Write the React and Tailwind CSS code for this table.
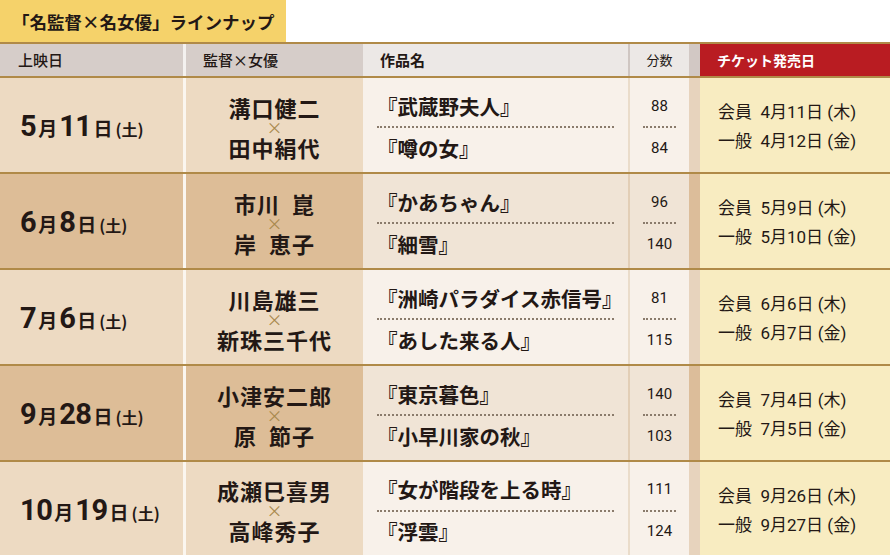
import React from 'react';

const rows = [
  { m: '5', d: '11', dir: ['溝口健二', '田中絹代'], films: ['『武蔵野夫人』', '『噂の女』'], mins: ['88', '84'], t: ['4月11日 (木)', '4月12日 (金)'] },
  { m: '6', d: '8', dir: ['市川\u2002崑', '岸\u2002恵子'], films: ['『かあちゃん』', '『細雪』'], mins: ['96', '140'], t: ['5月9日 (木)', '5月10日 (金)'] },
  { m: '7', d: '6', dir: ['川島雄三', '新珠三千代'], films: ['『洲崎パラダイス赤信号』', '『あした来る人』'], mins: ['81', '115'], t: ['6月6日 (木)', '6月7日 (金)'] },
  { m: '9', d: '28', dir: ['小津安二郎', '原\u2002節子'], films: ['『東京暮色』', '『小早川家の秋』'], mins: ['140', '103'], t: ['7月4日 (木)', '7月5日 (金)'] },
  { m: '10', d: '19', dir: ['成瀬巳喜男', '高峰秀子'], films: ['『女が階段を上る時』', '『浮雲』'], mins: ['111', '124'], t: ['9月26日 (木)', '9月27日 (金)'] },
];

const sans = 'font-["Noto_Sans_CJK_JP","Noto_Sans",sans-serif]';
const num = 'font-["Roboto","Noto_Sans_CJK_JP",sans-serif]';

const Row = ({ r, i }) => {
  const even = i % 2 === 1;
  const last = i === rows.length - 1;
  return (
    <div className={`flex ${last ? 'h-[93px]' : 'h-[96px] border-b-2 border-[#b08a48]'} text-[#231815]`}>
      {/* date */}
      <div className={`w-[183px] flex items-center pl-[20px] pt-[4px] ${even ? 'bg-[#ddbd97]' : 'bg-[#eddac2]'}`}>
        <div className={`${num} font-bold flex items-baseline`}>
          <span className="text-[29px] tracking-[-0.5px]">{r.m}</span>
          <span className={`${sans} text-[19px] mx-[2px]`}>月</span>
          <span className="text-[29px] tracking-[-0.5px]">{r.d}</span>
          <span className={`${sans} text-[19px] ml-[2px]`}>日</span>
          <span className={`${sans} text-[16px] ml-[3px]`}>(土)</span>
        </div>
      </div>
      <div className="w-[3px] bg-[#fbf6ef]" />
      {/* director x actress */}
      <div className={`w-[177px] flex flex-col items-center justify-center pt-[3px] ${sans} font-bold ${even ? 'bg-[#ddbd97]' : 'bg-[#eddac2]'}`}>
        <div className="text-[22px] leading-[24px] tracking-[1px] whitespace-pre">{r.dir[0]}</div>
        <div className="text-[16px] leading-[16px] font-normal text-[#a8894d]">×</div>
        <div className="text-[22px] leading-[24px] tracking-[1px] whitespace-pre">{r.dir[1]}</div>
      </div>
      {/* films */}
      <div className={`w-[265px] flex flex-col justify-center pl-[14px] pr-[14px] pt-[4px] ${sans} font-bold ${even ? 'bg-[#f0e4d6]' : 'bg-[#f8f1ea]'}`}>
        <div className="h-[40px] flex items-center text-[20.5px] whitespace-nowrap">{r.films[0]}</div>
        <div className="border-t-2 border-dotted border-[#8a7b6c]" />
        <div className="h-[40px] flex items-center text-[20.5px] whitespace-nowrap">{r.films[1]}</div>
      </div>
      <div className={`w-[2px] ${even ? 'bg-[#e2ceb6]' : 'bg-[#eadcca]'}`} />
      {/* minutes */}
      <div className={`w-[59px] flex flex-col justify-center px-[13px] pt-[4px] ${num} text-[15px] ${even ? 'bg-[#f0e4d6]' : 'bg-[#f8f1ea]'}`}>
        <div className="h-[40px] flex items-center justify-center">{r.mins[0]}</div>
        <div className="border-t-2 border-dotted border-[#8a7b6c]" />
        <div className="h-[40px] flex items-center justify-center">{r.mins[1]}</div>
      </div>
      <div className={`w-[11px] ${even ? 'bg-[#dcbd9a]' : 'bg-[#e7d3bd]'}`} />
      {/* ticket */}
      <div className={`w-[190px] flex flex-col justify-center pl-[18px] pt-[2px] bg-[#f8ecc1] ${num} text-[17px] leading-[28px]`}>
        <div className="whitespace-nowrap"><span className={sans}>会員</span>&nbsp;&nbsp;{r.t[0]}</div>
        <div className="whitespace-nowrap"><span className={sans}>一般</span>&nbsp;&nbsp;{r.t[1]}</div>
      </div>
    </div>
  );
};

export default function App() {
  return (
    <div className={`w-[890px] h-[555px] bg-white overflow-hidden ${sans}`}>
      <div className="w-[286px] h-[42px] bg-[#f5d26a] flex items-center pl-[12px] pt-[2px]">
        <span className="text-[17.5px] font-bold text-[#231815] whitespace-nowrap">「名監督×名女優」ラインナップ</span>
      </div>
      <div className="flex h-[36px] border-t-2 border-b-2 border-[#b08a48] text-[#231815]">
        <div className="w-[183px] bg-[#d6cdc9] flex items-center pl-[18px] text-[15px] font-medium">上映日</div>
        <div className="w-[3px] bg-[#f4f1ef]" />
        <div className="w-[177px] bg-[#d6cdc9] flex items-center pl-[17px] text-[15px] font-medium">監督×女優</div>
        <div className="w-[265px] bg-[#ece8e6] flex items-center pl-[17px] text-[15px] font-bold">作品名</div>
        <div className="w-[2px] bg-[#cfc6c2]" />
        <div className="w-[59px] bg-[#ece8e6] flex items-center justify-center text-[13px]">分数</div>
        <div className="w-[11px] bg-[#d2c8c4]" />
        <div className="w-[190px] bg-[#b91c22] flex items-center pl-[17px] text-[14px] font-bold text-white">チケット発売日</div>
      </div>
      {rows.map((r, i) => (
        <Row key={i} r={r} i={i} />
      ))}
    </div>
  );
}
